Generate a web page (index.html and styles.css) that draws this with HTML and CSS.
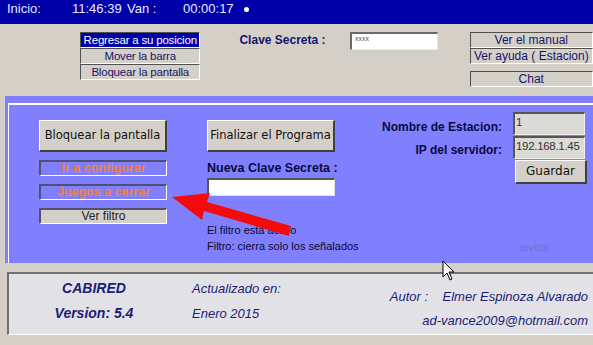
FILE: index.html
```html
<!DOCTYPE html>
<html lang="es">
<head>
    <meta charset="UTF-8">
    <title>CABIRED Estacion</title>
    <link rel="stylesheet" href="styles.css">
</head>
<body>
    <div class="screen">
        <div class="topbar">
            <span class="tb-label">Inicio:</span>
            <span class="tb-time">11:46:39</span>
            <span class="tb-van">Van :</span>
            <span class="tb-elapsed">00:00:17</span>
            <span class="tb-dot"></span>
        </div>

        <div class="toolbar">
            <div class="stack">
                <div class="flat selected">Regresar a su posicion</div>
                <div class="flat">Mover la barra</div>
                <div class="flat">Bloquear la pantalla</div>
            </div>
            <div class="clave-label">Clave Secreta :</div>
            <div class="clave-input">xxxx</div>
            <div class="stack right-stack">
                <div class="flat">Ver el manual</div>
                <div class="flat">Ver ayuda ( Estacion)</div>
                <div class="flat chat">Chat</div>
            </div>
        </div>

        <div class="panel">
            <div class="panel-inner">
                <div class="col col-left">
                    <div class="btn big">Bloquear la pantalla</div>
                    <div class="box warn">Ir a configurar</div>
                    <div class="box warn">Juegos a cerrar</div>
                    <div class="box gray">Ver filtro</div>
                </div>
                <div class="col col-mid">
                    <div class="btn big">Finalizar el Programa</div>
                    <div class="mid-label">Nueva Clave Secreta :</div>
                    <div class="white-input"></div>
                    <div class="note first">El filtro esta activo</div>
                    <div class="note">Filtro: cierra solo los señalados</div>
                </div>
                <div class="col col-right">
                    <div class="station">
                        <div class="st-label">Nombre de Estacion:</div>
                        <div class="st-input">1</div>
                        <div class="st-label">IP del servidor:</div>
                        <div class="st-input">192.168.1.45</div>
                        <div></div>
                        <div class="btn guardar">Guardar</div>
                    </div>
                    <div class="revisar">revisar</div>
                </div>
            </div>
        </div>

        <div class="footer">
            <div class="f-col f-name">
                <div class="f-line">CABIRED</div>
                <div class="f-line">Version: 5.4</div>
            </div>
            <div class="f-col f-date">
                <div class="f-line">Actualizado en:</div>
                <div class="f-line">Enero 2015</div>
            </div>
            <div class="f-col f-author">
                <div class="f-line">Autor :&nbsp;&nbsp;&nbsp; Elmer Espinoza Alvarado</div>
                <div class="f-line">ad-vance2009@hotmail.com</div>
            </div>
        </div>

        <!-- red pointer drawn on top of the screenshot -->
        <svg class="arrow" width="593" height="345" viewBox="0 0 593 345">
            <polygon points="291,226 207,202 210,193 172,197 202,220 204,211 289,236" fill="#f40c0c"/>
        </svg>
        <svg class="cursor" width="14" height="22" viewBox="0 0 14 22">
            <path d="M1 1 L1 17 L5 13 L8 20 L10 19 L7 12 L12 12 Z" fill="#fff" stroke="#000" stroke-width="1"/>
        </svg>
    </div>
</body>
</html>
```

FILE: styles.css
```css
body {
    margin: 0;
    background: #d4d0c8;
    font-family: "Liberation Sans", Arial, sans-serif;
}
.screen {
    position: relative;
    width: 593px;
    height: 345px;
    overflow: hidden;
    background: #d4d0c8;
}

/* top blue strip */
.topbar {
    height: 24px;
    background: #0000a8;
    color: #e8e8ff;
    font-size: 13px;
    line-height: 16px;
    display: flex;
    align-items: flex-start;
    padding-top: 1px;
    box-sizing: border-box;
}
.topbar span { flex-shrink: 0; }
.tb-label { margin-left: 7px; width: 65px; }
.tb-time { width: 55px; }
.tb-van { width: 56px; }
.tb-elapsed { width: 61px; }
.tb-dot {
    width: 5px;
    height: 5px;
    margin-top: 6px;
    border-radius: 50%;
    background: #fff;
}

/* gray toolbar */
.toolbar {
    height: 72px;
    display: flex;
    align-items: flex-start;
    padding-top: 8px;
    box-sizing: border-box;
}
.stack {
    margin-left: 80px;
    width: 121px;
    display: flex;
    flex-direction: column;
}
.flat {
    height: 16px;
    box-sizing: border-box;
    border-top: 1px solid #505050;
    border-left: 1px solid #505050;
    border-bottom: 1px solid #fff;
    border-right: 1px solid #fff;
    font-size: 11.5px;
    line-height: 14px;
    color: #14146e;
    text-align: center;
    white-space: nowrap;
    overflow: hidden;
}
.stack .flat { letter-spacing: -0.2px; }
.flat.selected {
    background: #0000a8;
    color: #fff;
}
.clave-label {
    margin-left: 39px;
    margin-top: 1px;
    width: 111px;
    font-size: 12px;
    font-weight: bold;
    color: #14146e;
}
.clave-input {
    width: 88px;
    height: 18px;
    box-sizing: border-box;
    background: #fff;
    border-top: 2px solid #6a6a6a;
    border-left: 2px solid #6a6a6a;
    border-bottom: 1px solid #e8e8e8;
    border-right: 1px solid #e8e8e8;
    font-size: 7px;
    line-height: 10px;
    padding-left: 3px;
    color: #555;
}
.right-stack {
    margin-left: 32px;
    width: 124px;
}
.right-stack .flat { letter-spacing: 0; font-size: 12px; }
.flat.chat { margin-top: 7px; }

/* blue panel */
.panel {
    margin-left: 5px;
    height: 167px;
    background: #8080ff;
    padding: 7px 0 0 3px;
    box-sizing: border-box;
}
.panel-inner {
    height: 100%;
    border-top: 2px solid #fff;
    border-left: 1px solid #fff;
    box-sizing: border-box;
    display: flex;
    padding-top: 15px;
    padding-left: 30px;
}
.col { display: flex; flex-direction: column; }
.col-left { width: 128px; }
.col-mid { width: 130px; margin-left: 40px; }
.col-right { flex: 1; margin-top: -8px; padding-right: 8px; }

.btn {
    background: #d4d0c8;
    box-sizing: border-box;
    border-top: 1px solid #fff;
    border-left: 1px solid #fff;
    border-right: 2px solid #404040;
    border-bottom: 2px solid #404040;
    font-family: "DejaVu Sans", Verdana, sans-serif;
    color: #111;
    text-align: center;
    white-space: nowrap;
}
.btn.big {
    height: 32px;
    font-size: 11.5px;
    line-height: 29px;
}
.col-mid .btn.big { width: 128px; }
.box {
    height: 16px;
    margin-top: 8px;
    box-sizing: border-box;
    border-top: 2px solid #505070;
    border-left: 2px solid #505070;
    border-bottom: 1px solid #fff;
    border-right: 1px solid #fff;
    font-size: 12px;
    line-height: 13px;
    text-align: center;
}
.box.warn {
    color: #f08040;
    font-weight: bold;
    font-size: 12.5px;
}
.box.gray {
    background: #d4d0c8;
    color: #222;
}

.mid-label {
    margin-top: 8px;
    font-size: 12.5px;
    font-weight: bold;
    color: #0a0a40;
    line-height: 16px;
    white-space: nowrap;
}
.white-input {
    width: 128px;
    height: 18px;
    margin-top: 2px;
    box-sizing: border-box;
    background: #fff;
    border-top: 2px solid #555;
    border-left: 2px solid #555;
    border-bottom: 1px solid #e0e0e0;
    border-right: 1px solid #e0e0e0;
}
.note {
    font-size: 11px;
    line-height: 16px;
    color: #0a0a30;
    white-space: nowrap;
}
.note.first { margin-top: 26px; }

.station {
    display: grid;
    grid-template-columns: 1fr 72px;
    column-gap: 11px;
    grid-auto-rows: auto;
    align-items: center;
}
.st-label {
    text-align: right;
    font-size: 12px;
    font-weight: bold;
    color: #0a0a40;
    white-space: nowrap;
    padding-top: 6px;
}
.st-label + .st-input + .st-label { padding-top: 4px; }
.st-input {
    height: 23px;
    margin-bottom: 1px;
    box-sizing: border-box;
    background: #dcdad4;
    border-top: 2px solid #555;
    border-left: 2px solid #555;
    border-bottom: 1px solid #f0f0f0;
    border-right: 1px solid #f0f0f0;
    font-size: 11.5px;
    line-height: 16px;
    padding-left: 1px;
    color: #333;
    white-space: nowrap;
    letter-spacing: -0.3px;
    overflow: hidden;
}
.btn.guardar {
    width: 72px;
    height: 24px;
    margin-left: 2px;
    font-size: 12px;
    line-height: 20px;
}
.revisar {
    margin-top: 58px;
    margin-left: 183px;
    font-size: 10px;
    color: #7070d0;
}

/* bottom credits */
.footer {
    margin: 9px 0 0 7px;
    height: 63px;
    box-sizing: border-box;
    background: #e2e2e6;
    border-top: 2px solid #707070;
    border-left: 2px solid #707070;
    border-bottom: 1px solid #fff;
    display: flex;
    font-style: italic;
    color: #1c1c78;
    font-size: 13px;
}
.f-col { display: flex; flex-direction: column; }
.f-line { line-height: 25px; white-space: nowrap; }
.f-name {
    width: 146px;
    margin-left: 12px;
    text-align: center;
    font-weight: bold;
    font-size: 14px;
    padding-top: 2px;
}
.f-date { margin-left: 25px; padding-top: 2px; }
.f-author {
    flex: 1;
    text-align: right;
    padding-right: 5px;
    padding-top: 11px;
}
.f-author .f-line { line-height: 24px; }

/* overlays */
.arrow {
    position: absolute;
    left: 0;
    top: 0;
    pointer-events: none;
}
.cursor {
    position: absolute;
    left: 442px;
    top: 260px;
}
```
